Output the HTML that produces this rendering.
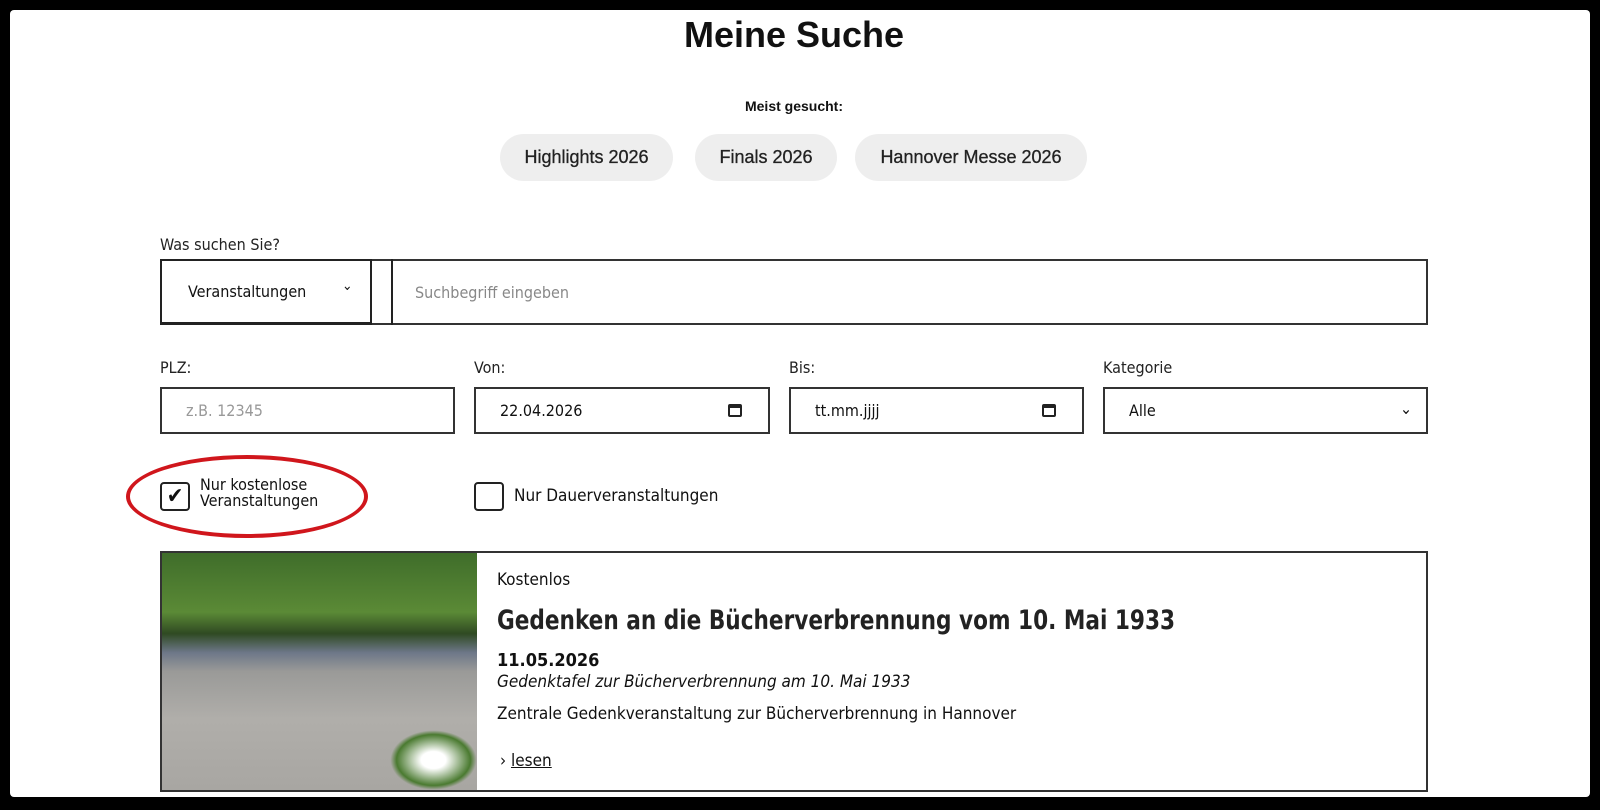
<!DOCTYPE html>
<html><head><style>
*{box-sizing:border-box;margin:0;padding:0}
body{width:1600px;height:810px;background:#000;position:relative;overflow:hidden;font-family:"DejaVu Sans Condensed","Liberation Sans",sans-serif;color:#111}
#pg{position:absolute;left:10px;top:10px;width:1580px;height:787px;background:#fff;border-radius:4px}
.a{position:absolute}
.pill{position:absolute;top:134px;height:47px;background:#eeeeee;border-radius:24px;font:18px "Liberation Sans",sans-serif;color:#222;display:flex;align-items:center;justify-content:center;-webkit-text-stroke:0.3px #222}
.lbl{position:absolute;font-size:16px;color:#222}
.inp{position:absolute;top:387px;height:47px;border:2px solid #333;font-size:16px;display:flex;align-items:center;padding-left:24px}
.cal{position:absolute;right:26px;top:15px;width:14px;height:13px;border:2px solid #222;border-top-width:4px;border-radius:2px}
</style></head><body>
<div id="pg"></div>
<div class="a" style="left:0;width:1588px;top:14px;text-align:center;font:bold 36px 'Liberation Sans',sans-serif">Meine Suche</div>
<div class="a" style="left:0;width:1588px;top:98px;text-align:center;font:bold 14px 'Liberation Sans',sans-serif">Meist gesucht:</div>
<div class="pill" style="left:500px;width:173px">Highlights 2026</div>
<div class="pill" style="left:695px;width:142px">Finals 2026</div>
<div class="pill" style="left:855px;width:232px">Hannover Messe 2026</div>
<div class="lbl" style="left:160px;top:235px">Was suchen Sie?</div>
<div class="a" style="left:160px;top:259px;width:1268px;height:66px;border:2px solid #333"></div>
<div class="a" style="left:160px;top:259px;width:212px;height:66px;border:2px solid #222;border-width:2px 2px 3px 2px;font-size:16px;padding:21px 0 0 26px">Veranstaltungen<span style="position:absolute;left:180px;top:17px;font-size:14px">&#8964;</span></div>
<div class="a" style="left:391px;top:259px;width:2px;height:66px;background:#222"></div>
<div class="a" style="left:415px;top:283px;font-size:16px;color:#888">Suchbegriff eingeben</div>
<div class="lbl" style="left:160px;top:358px">PLZ:</div>
<div class="lbl" style="left:474px;top:358px">Von:</div>
<div class="lbl" style="left:789px;top:358px">Bis:</div>
<div class="lbl" style="left:1103px;top:358px">Kategorie</div>
<div class="inp" style="left:160px;width:295px;color:#999">z.B. 12345</div>
<div class="inp" style="left:474px;width:296px">22.04.2026<span class="cal"></span></div>
<div class="inp" style="left:789px;width:295px">tt.mm.jjjj<span class="cal"></span></div>
<div class="inp" style="left:1103px;width:325px">Alle<span style="position:absolute;right:14px;top:10px;font-size:16px">&#8964;</span></div>
<div class="a" style="left:126px;top:455px;width:242px;height:83px;border:4px solid #d0161c;border-radius:50%"></div>
<div class="a" style="left:160px;top:482px;width:30px;height:29px;border:2px solid #222;border-radius:4px;font-size:22px;text-align:center;line-height:26px">&#10004;</div>
<div class="a" style="left:200px;top:477px;font-size:16px;line-height:16px">Nur kostenlose<br>Veranstaltungen</div>
<div class="a" style="left:474px;top:482px;width:30px;height:29px;border:2px solid #222;border-radius:4px"></div>
<div class="a" style="left:514px;top:486px;font-size:17px">Nur Dauerveranstaltungen</div>
<div class="a" style="left:160px;top:551px;width:1268px;height:241px;border:2px solid #333"></div>
<div class="a" style="left:162px;top:553px;width:315px;height:237px;background:linear-gradient(180deg,#3f6d2a 0%,#5b8a36 25%,#2f4a22 34%,#6d7788 42%,#9a9a98 50%,#b0aeaa 70%,#a8a6a2 100%)"></div>
<div class="a" style="left:390px;top:730px;width:87px;height:60px;background:radial-gradient(#fff 20%,#4a7a30 60%,transparent 70%)"></div>
<div class="a" style="left:497px;top:570px;font-size:17px">Kostenlos</div>
<div class="a" style="left:497px;top:605px;font-size:27px;font-weight:bold;color:#222;transform:scaleX(0.89);transform-origin:left">Gedenken an die Bücherverbrennung vom 10. Mai 1933</div>
<div class="a" style="left:497px;top:650px;font-size:18px;font-weight:bold">11.05.2026</div>
<div class="a" style="left:497px;top:672px;font-size:17px;font-style:italic">Gedenktafel zur Bücherverbrennung am 10. Mai 1933</div>
<div class="a" style="left:497px;top:704px;font-size:17px">Zentrale Gedenkveranstaltung zur Bücherverbrennung in Hannover</div>
<div class="a" style="left:500px;top:751px;font-size:17px">&#8250; <u>lesen</u></div>
</body></html>
